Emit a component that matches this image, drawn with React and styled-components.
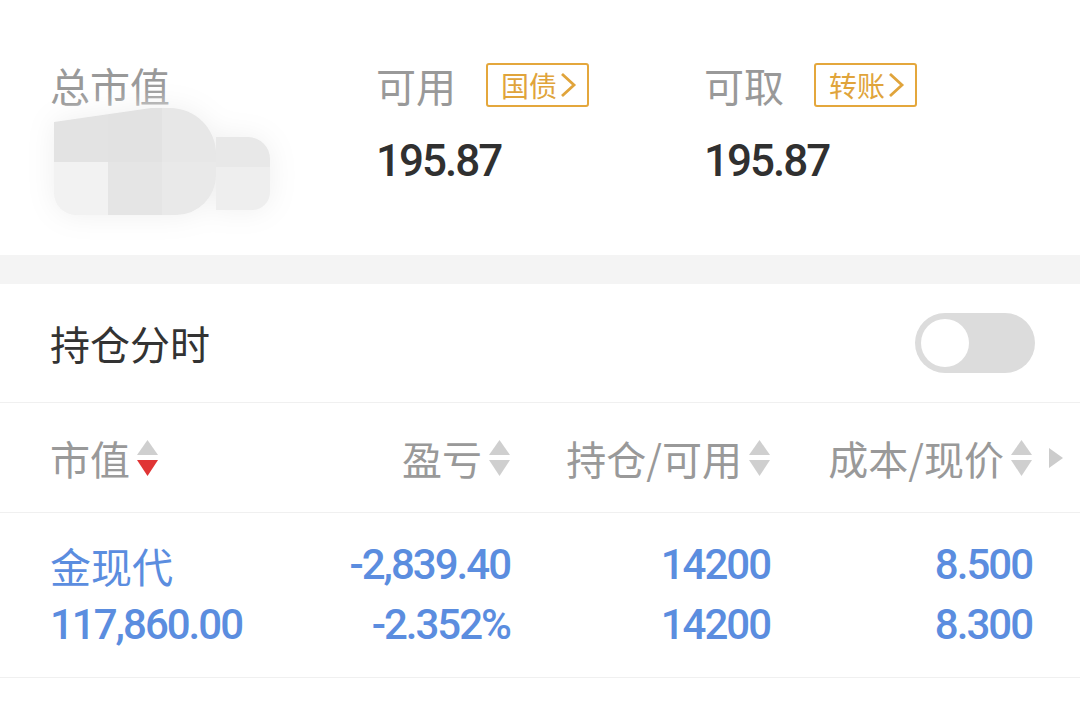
import React from "react";
import styled, { createGlobalStyle } from "styled-components";

const GlobalStyle = createGlobalStyle`
  body {
    margin: 0;
    background: #fff;
    font-family: Roboto, "Noto Sans CJK SC", sans-serif;
  }
`;

const Page = styled.div`
  width: 1080px;
  height: 708px;
  overflow: hidden;
  background: #fff;
`;

/* ---- summary ---- */
const Summary = styled.section`
  height: 255px;
  box-sizing: border-box;
  padding: 63px 0 0 50px;
  display: grid;
  grid-template-columns: 326px 328px 1fr;
`;

const SummaryCol = styled.div`
  display: flex;
  flex-direction: column;
`;

const LabelRow = styled.div`
  height: 44px;
  display: flex;
  align-items: center;
  gap: 30px;
`;

const Label = styled.span`
  font-family: "Noto Sans CJK SC", sans-serif;
  font-size: 40px;
  color: #999;
  line-height: 44px;
`;

const Badge = styled.span`
  height: 44px;
  box-sizing: border-box;
  border: 2px solid #e4a73c;
  border-radius: 3px;
  padding: 0 10px 0 13px;
  display: flex;
  align-items: center;
  gap: 3px;
  font-family: "Noto Sans CJK SC", sans-serif;
  font-size: 28px;
  color: #e0a43b;
`;

const Amount = styled.div`
  margin-top: 28px;
  font-family: Roboto, sans-serif;
  font-weight: 500;
  font-size: 44px;
  letter-spacing: -2px;
  line-height: 52px;
  color: #303030;
`;

const Mosaic = styled.div`
  margin: 1px 0 0 4px;
  display: flex;
  align-items: center;
  width: 216px;
  filter: drop-shadow(0 0 14px #efefef);
`;

const MosaicBlock = styled.div`
  display: grid;
  grid-template-columns: repeat(3, 54px);
  grid-template-rows: 54px 53px;
  border-radius: 14px 46px 40px 22px;
  overflow: hidden;
  clip-path: polygon(0 14px, 60% 0, 100% 0, 100% 100%, 0 100%);
`;

const MosaicTail = styled.div`
  display: grid;
  grid-template-rows: 30px 43px;
  width: 54px;
  margin-top: 24px;
  border-radius: 0 22px 18px 0;
  overflow: hidden;
`;

const Tile = styled.div`
  background: ${p => p.$tone};
`;

/* ---- band ---- */
const Band = styled.div`
  height: 29px;
  background: #f4f4f4;
`;

/* ---- toggle row ---- */
const ToggleRow = styled.div`
  height: 119px;
  box-sizing: border-box;
  padding: 0 45px 0 50px;
  display: flex;
  align-items: center;
  justify-content: space-between;
  border-bottom: 1px solid #f0f0f0;
`;

const Title = styled.span`
  font-family: "Noto Sans CJK SC", sans-serif;
  font-size: 40px;
  color: #333;
`;

const Switch = styled.div`
  width: 120px;
  height: 60px;
  border-radius: 30px;
  background: #dcdcdc;
  display: flex;
  align-items: center;
  padding: 0 6px;
  box-sizing: border-box;
`;

const Knob = styled.div`
  width: 48px;
  height: 48px;
  border-radius: 50%;
  background: #fff;
`;

/* ---- table ---- */
const Grid = styled.div`
  display: grid;
  grid-template-columns: 200px 260px 260px 262px 1fr;
  padding-left: 50px;
  box-sizing: border-box;
  border-bottom: 1px solid #f0f0f0;
`;

const HeaderRow = styled(Grid)`
  height: 110px;
  align-items: center;
`;

const DataRow = styled(Grid)`
  height: 165px;
  padding-top: 22px;
  align-content: start;
`;

const HeadCell = styled.div`
  display: flex;
  align-items: center;
  justify-content: ${p => (p.$left ? "flex-start" : "flex-end")};
  gap: 7px;
  font-family: "Noto Sans CJK SC", sans-serif;
  font-size: 40px;
  color: #999;
  line-height: 50px;
`;

const More = styled.div`
  display: flex;
  align-items: center;
  padding-left: 17px;
`;

const Cell = styled.div`
  display: flex;
  flex-direction: column;
  align-items: ${p => (p.$left ? "flex-start" : "flex-end")};
  color: #5b8ddf;
`;

const Value = styled.span`
  height: 60px;
  line-height: 60px;
  white-space: nowrap;
  font-family: ${p =>
    p.$cjk ? '"Noto Sans CJK SC", sans-serif' : "Roboto, sans-serif"};
  font-size: ${p => (p.$cjk ? "41px" : "42px")};
  font-weight: ${p => (p.$cjk ? 400 : 500)};
  letter-spacing: ${p => (p.$cjk ? "0" : "-2px")};
`;

const Chevron = () => (
  <svg width="17" height="26" viewBox="0 0 17 26">
    <path d="M2 2 L14 13 L2 24" fill="none" stroke="#e0a43b" strokeWidth="2.8" />
  </svg>
);

const SortIcon = ({ active }) => (
  <svg width="21" height="38" viewBox="0 0 21 38">
    <path d="M10.5 1 L21 16 L0 16 Z" fill="#cfcfcf" />
    <path d="M0 21 L21 21 L10.5 37 Z" fill={active ? "#e03535" : "#cfcfcf"} />
  </svg>
);

const PlayIcon = () => (
  <svg width="14" height="20" viewBox="0 0 14 20">
    <path d="M0 0 L14 10 L0 20 Z" fill="#cccccc" />
  </svg>
);

const mosaicTiles = ["#e3e3e3", "#e2e2e2", "#e7e7e7", "#f2f2f2", "#e5e5e5", "#e9e9e9"];
const tailTiles = ["#e8e8e8", "#eeeeee"];

const columns = [
  { label: "市值", left: true, active: true },
  { label: "盈亏" },
  { label: "持仓/可用" },
  { label: "成本/现价" },
];

const holding = [
  { left: true, top: "金现代", bottom: "117,860.00", cjk: true },
  { top: "-2,839.40", bottom: "-2.352%" },
  { top: "14200", bottom: "14200" },
  { top: "8.500", bottom: "8.300" },
];

export default function App() {
  return (
    <Page>
      <GlobalStyle />
      <Summary>
        <SummaryCol>
          <LabelRow>
            <Label>总市值</Label>
          </LabelRow>
          <Mosaic>
            <MosaicBlock>
              {mosaicTiles.map((t, i) => (
                <Tile key={i} $tone={t} />
              ))}
            </MosaicBlock>
            <MosaicTail>
              {tailTiles.map((t, i) => (
                <Tile key={i} $tone={t} />
              ))}
            </MosaicTail>
          </Mosaic>
        </SummaryCol>
        <SummaryCol>
          <LabelRow>
            <Label>可用</Label>
            <Badge>
              国债
              <Chevron />
            </Badge>
          </LabelRow>
          <Amount>195.87</Amount>
        </SummaryCol>
        <SummaryCol>
          <LabelRow>
            <Label>可取</Label>
            <Badge>
              转账
              <Chevron />
            </Badge>
          </LabelRow>
          <Amount>195.87</Amount>
        </SummaryCol>
      </Summary>

      <Band />

      <ToggleRow>
        <Title>持仓分时</Title>
        <Switch>
          <Knob />
        </Switch>
      </ToggleRow>

      <HeaderRow>
        {columns.map(c => (
          <HeadCell key={c.label} $left={c.left}>
            {c.label}
            <SortIcon active={c.active} />
          </HeadCell>
        ))}
        <More>
          <PlayIcon />
        </More>
      </HeaderRow>

      <DataRow>
        {holding.map((h, i) => (
          <Cell key={i} $left={h.left}>
            <Value $cjk={h.cjk}>{h.top}</Value>
            <Value>{h.bottom}</Value>
          </Cell>
        ))}
      </DataRow>
    </Page>
  );
}
